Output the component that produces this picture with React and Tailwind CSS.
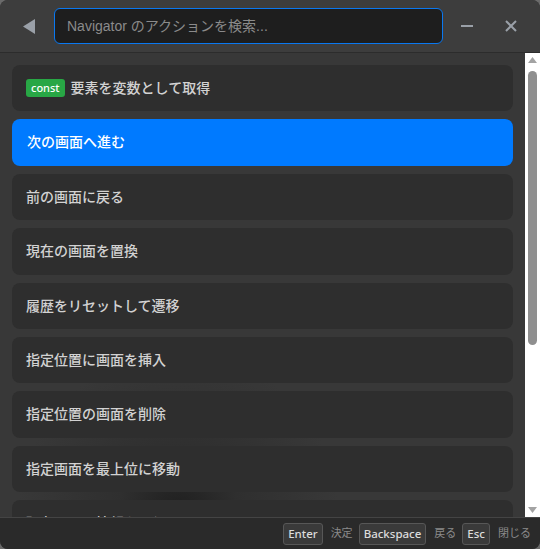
import { useState } from "react"

const actions = [
  { label: "要素を変数として取得", badge: "const" },
  { label: "次の画面へ進む" },
  { label: "前の画面に戻る" },
  { label: "現在の画面を置換" },
  { label: "履歴をリセットして遷移" },
  { label: "指定位置に画面を挿入" },
  { label: "指定位置の画面を削除" },
  { label: "指定画面を最上位に移動" },
  { label: "現在の画面情報を取得" },
  { label: "履歴の件数を取得" },
  { label: "戻れるかどうかを確認" },
  { label: "画面スタックを取得" },
  { label: "遷移イベントを監視" },
]

const keys = [
  { key: "Enter", label: "決定" },
  { key: "Backspace", label: "戻る" },
  { key: "Esc", label: "閉じる" },
]

function App () {
  const [selected] = useState(1)

  return (
    <div className="w-[540px] h-[549px] bg-[#6a6a6a] font-['Noto_Sans','Noto_Sans_CJK_JP',sans-serif]">
      <div className="flex flex-col h-full rounded-lg overflow-hidden bg-[#383838]">

        {/* header */}
        <div className="flex items-center gap-1 h-[53px] pl-2 pr-[9px] bg-[#3d3d3d] border-b border-[#2c2c2c] shrink-0">
          <button className="w-[42px] h-9 flex items-center justify-center">
            <svg width="14" height="17" viewBox="0 0 14 17">
              <path d="M13 1 L1 8.5 L13 16 Z" fill="#9aa0a8" />
            </svg>
          </button>
          <input
            className="flex-1 h-9 px-3 rounded-md bg-[#1e1e1e] border border-[#0a78f0] text-[14px] text-[#d8d8d8] placeholder:text-[#8b8b8b] outline-none font-['Liberation_Sans','Noto_Sans_CJK_JP',sans-serif]"
            placeholder="Navigator のアクションを検索..."
          />
          <button className="w-10 h-9 flex items-center justify-center">
            <svg width="14" height="4" viewBox="0 0 14 4">
              <path d="M1 2 H13" stroke="#9aa0a8" strokeWidth="2" />
            </svg>
          </button>
          <button className="w-10 h-9 flex items-center justify-center">
            <svg width="14" height="14" viewBox="0 0 14 14">
              <path d="M2 2 L12 12 M12 2 L2 12" stroke="#9aa0a8" strokeWidth="2" />
            </svg>
          </button>
        </div>

        {/* list + scrollbar */}
        <div className="flex flex-1 min-h-0">
          <div className="flex-1 overflow-hidden bg-[radial-gradient(circle_at_34%_99%,#1f1f1f_0,#2f2f2f_60px,#383838_160px)]">
            <div className="flex flex-col gap-2 px-3 pt-3 pb-3">
              {actions.map((a, i) => (
                <div
                  key={a.label}
                  className={
                    i === selected
                      ? "flex items-center gap-1.5 py-3 px-[15px] rounded-lg bg-[#007aff] text-white text-[14px] leading-[1.6] font-medium"
                      : "flex items-center gap-1.5 py-3 px-[14px] rounded-lg bg-[#2e2e2e] text-[#d2d2d2] text-[14px] leading-[1.6] font-medium"
                  }
                >
                  {a.badge && (
                    <span className="px-[5px] rounded-[3px] bg-[#28a745] text-white text-[11px] leading-[18px] font-medium">
                      {a.badge}
                    </span>
                  )}
                  <span>{a.label}</span>
                </div>
              ))}
            </div>
          </div>

          {/* scrollbar */}
          <div className="w-[15px] shrink-0 bg-white flex flex-col items-center pt-[4px] pb-[4px]">
            <svg width="9" height="6" viewBox="0 0 9 6" className="shrink-0">
              <path d="M4.5 0 L9 6 L0 6 Z" fill="#a3a3a3" />
            </svg>
            <div className="flex-1 w-full flex flex-col items-center pt-[8px] pb-[8px]">
              <div className="w-[9px] h-[274px] rounded-full bg-[#8f8f8f]" />
            </div>
            <svg width="9" height="6" viewBox="0 0 9 6" className="shrink-0">
              <path d="M0 0 L9 0 L4.5 6 Z" fill="#a3a3a3" />
            </svg>
          </div>
        </div>

        {/* footer */}
        <div className="flex items-center justify-end gap-1.5 h-[32px] pr-[9px] bg-[#2a2a2a] border-t border-[#444] shrink-0">
          {keys.map((k) => (
            <div key={k.key} className="flex items-center gap-2">
              <span className="px-[4px] h-[22px] flex items-center rounded-[3px] bg-[#3a3a3a] border border-[#575757] text-[11.5px] font-medium text-[#dcdcdc]">
                {k.key}
              </span>
              <span className="text-[11px] text-[#8a8a8a]">{k.label}</span>
            </div>
          ))}
        </div>
      </div>
    </div>
  )
}

export default App
